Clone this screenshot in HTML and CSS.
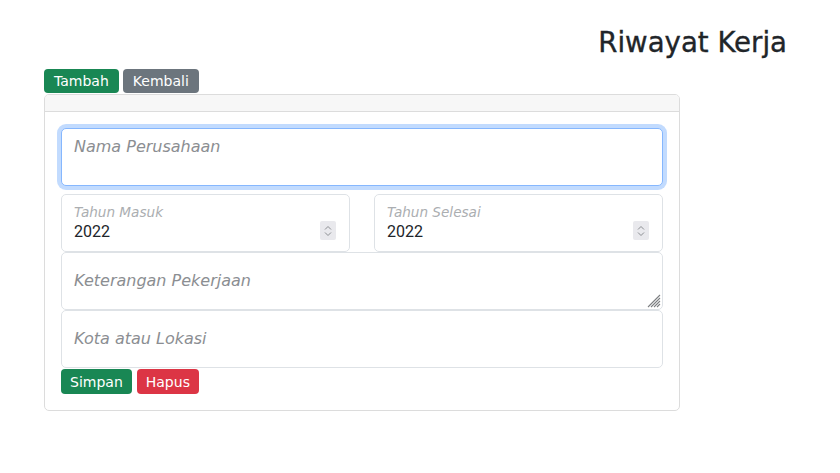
FILE: index.html
```html
<!DOCTYPE html>
<html lang="id">
<head>
<meta charset="utf-8">
<title>Riwayat Kerja</title>
<link rel="stylesheet" href="styles.css">
</head>
<body>
<main class="page">
  <h2 class="page-title">Riwayat Kerja</h2>
  <div class="toolbar">
    <button class="btn btn-green" type="button">Tambah</button>
    <button class="btn btn-grey" type="button">Kembali</button>
  </div>

  <section class="card">
    <div class="card-header"></div>
    <form class="card-body">
      <textarea class="field field-plain is-focused" placeholder="Nama Perusahaan"></textarea>

      <div class="year-row">
        <div class="floating">
          <input class="field field-number" type="text" value="2022">
          <label class="float-label float-label-up">Tahun Masuk</label>
          <span class="spinner" aria-hidden="true">
            <svg width="8" height="12" viewBox="0 0 8 12"><path d="M1 4.5 4 1.5 7 4.5M1 7.5 4 10.5 7 7.5" fill="none" stroke="#8a8d91" stroke-width="1"/></svg>
          </span>
        </div>
        <div class="floating">
          <input class="field field-number" type="text" value="2022">
          <label class="float-label float-label-up">Tahun Selesai</label>
          <span class="spinner" aria-hidden="true">
            <svg width="8" height="12" viewBox="0 0 8 12"><path d="M1 4.5 4 1.5 7 4.5M1 7.5 4 10.5 7 7.5" fill="none" stroke="#8a8d91" stroke-width="1"/></svg>
          </span>
        </div>
      </div>

      <div class="floating">
        <textarea class="field field-area"></textarea>
        <label class="float-label">Keterangan Pekerjaan</label>
        <svg class="grip" width="14" height="14" viewBox="0 0 14 14" aria-hidden="true">
          <path d="M13 1 1 13M13 4 4 13M13 7 7 13M13 10 10 13" fill="none" stroke="#7d7f82" stroke-width="1.1"/>
        </svg>
      </div>

      <div class="floating">
        <input class="field field-text" type="text">
        <label class="float-label">Kota atau Lokasi</label>
      </div>

      <div class="actions">
        <button class="btn btn-green btn-tall" type="button">Simpan</button>
        <button class="btn btn-red btn-tall" type="button">Hapus</button>
      </div>
    </form>
  </section>
</main>
</body>
</html>
```

FILE: styles.css
```css
* {
  box-sizing: border-box;
}

body {
  margin: 0;
  background: #fff;
  color: #212529;
  font-family: "DejaVu Sans", "Open Sans", sans-serif;
}

.page {
  padding: 26px 0 0 44px;
}

.page-title {
  margin: 0 53px 9px 0;
  text-align: right;
  font-size: 27.6px;
  font-weight: 400;
  line-height: 34px;
  color: #212529;
  -webkit-text-stroke: 0.35px #212529;
}

/* buttons */
.toolbar {
  display: flex;
  gap: 4px;
  height: 25px;
}

.btn {
  border: 0;
  border-radius: 4px;
  padding: 0 10px;
  height: 24px;
  font-family: inherit;
  font-size: 14px;
  line-height: 24px;
  color: #fff;
  cursor: pointer;
}

.btn-tall {
  height: 25px;
  padding: 0 9px;
}

.btn-green { background: #198754; }
.btn-grey  { background: #6c757d; }
.btn-red   { background: #dc3545; }

/* card */
.card {
  width: 636px;
  border: 1px solid #dcdcdc;
  border-radius: 5px;
  overflow: hidden;
}

.card-header {
  height: 17px;
  background: #f7f7f7;
  border-bottom: 1px solid #dcdcdc;
}

.card-body {
  display: flex;
  flex-direction: column;
  padding: 16px;
}

/* fields */
.field {
  display: block;
  width: 100%;
  height: 58px;
  margin: 0;
  border: 1px solid #dee2e6;
  border-radius: 5px;
  background: #fff;
  color: #212529;
  font-family: inherit;
  font-size: 16px;
  line-height: 24px;
  outline: none;
}

.field-plain {
  padding: 6px 12px;
  resize: none;
  overflow: hidden;
}

.field-plain::placeholder {
  color: #8b8e92;
  font-style: italic;
}

.is-focused {
  border-color: #86b7fe;
  box-shadow: 0 0 0 4px rgba(13, 110, 253, 0.25);
}

.floating {
  position: relative;
}

.field-number {
  padding: 24px 12px 8px;
  font-family: Roboto, "Liberation Sans", sans-serif;
  font-size: 16px;
}

.field-area {
  padding: 16px 12px;
  resize: none;
}

.field-text {
  padding: 16px 12px;
}

.float-label {
  position: absolute;
  top: 0;
  left: 0;
  padding: 17px 13px;
  font-size: 16px;
  line-height: 24px;
  font-style: italic;
  color: #8b8e92;
  pointer-events: none;
}

.float-label-up {
  padding: 8px 13px;
  font-size: 13.6px;
  line-height: 20px;
  color: #abaeb1;
}

.spinner {
  position: absolute;
  right: 14px;
  top: 27px;
  width: 16px;
  height: 19px;
  display: flex;
  align-items: center;
  justify-content: center;
  background: #e9e9ed;
  border-radius: 2px;
}

/* textarea resize grip */
.grip {
  position: absolute;
  right: 2px;
  bottom: 2px;
  pointer-events: none;
}

.year-row {
  display: grid;
  grid-template-columns: 1fr 1fr;
  column-gap: 24px;
  margin-top: 8px;
}

.actions {
  display: flex;
  gap: 5px;
  margin-top: 1px;
}
```
